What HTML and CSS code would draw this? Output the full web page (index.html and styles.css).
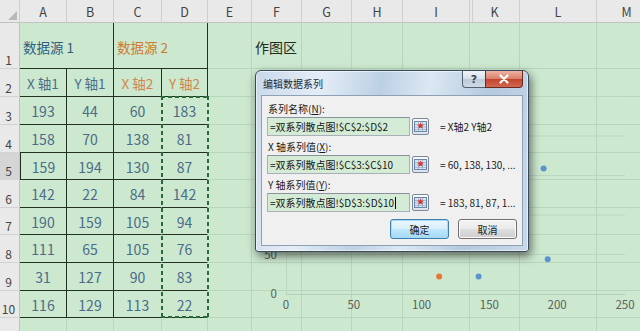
FILE: index.html
```html
<!DOCTYPE html>
<html lang="zh-CN">
<head>
<meta charset="utf-8">
<title>编辑数据系列</title>
<link rel="stylesheet" href="styles.css">
</head>
<body>
<div class="sheet">
  <div class="grid">
    <div class="hd corner"><span class="tri"></span></div>
    <div class="hd">A</div><div class="hd">B</div><div class="hd">C</div><div class="hd">D</div>
    <div class="hd">E</div><div class="hd">F</div><div class="hd">G</div><div class="hd">H</div>
    <div class="hd">I</div><div class="hd hidden-left">K</div><div class="hd">L</div><div class="hd">M</div>

    <div class="rh">1</div>
    <div class="d span2 src blue-dark">数据源 1</div>
    <div class="d span2 src orange-dark">数据源 2</div>
    <div class="c"></div>
    <div class="c plot-title">作图区</div>
    <div class="c"></div><div class="c"></div><div class="c"></div><div class="c"></div><div class="c"></div><div class="c"></div>

    <div class="rh">2</div>
    <div class="d lbl blue">X 轴1</div>
    <div class="d lbl blue">Y 轴1</div>
    <div class="d lbl orange">X 轴2</div>
    <div class="d lbl orange">Y 轴2</div>
    <div class="c"></div><div class="c"></div><div class="c"></div><div class="c"></div><div class="c"></div><div class="c"></div><div class="c"></div><div class="c"></div>

    <div class="rh">3</div>
    <div class="d num">193</div><div class="d num">44</div><div class="d num dc">60</div><div class="d num dd">183</div>
    <div class="c"></div><div class="c"></div><div class="c"></div><div class="c"></div><div class="c"></div><div class="c"></div><div class="c"></div><div class="c"></div>

    <div class="rh">4</div>
    <div class="d num">158</div><div class="d num">70</div><div class="d num dc">138</div><div class="d num dd">81</div>
    <div class="c"></div><div class="c"></div><div class="c"></div><div class="c"></div><div class="c"></div><div class="c"></div><div class="c"></div><div class="c"></div>

    <div class="rh sel">5</div>
    <div class="d num first">159</div><div class="d num">194</div><div class="d num dc">130</div><div class="d num dd">87</div>
    <div class="c"></div><div class="c"></div><div class="c"></div><div class="c"></div><div class="c"></div><div class="c"></div><div class="c"></div><div class="c"></div>

    <div class="rh">6</div>
    <div class="d num">142</div><div class="d num">22</div><div class="d num dc">84</div><div class="d num dd">142</div>
    <div class="c"></div><div class="c"></div><div class="c"></div><div class="c"></div><div class="c"></div><div class="c"></div><div class="c"></div><div class="c"></div>

    <div class="rh">7</div>
    <div class="d num">190</div><div class="d num">159</div><div class="d num dc">105</div><div class="d num dd">94</div>
    <div class="c"></div><div class="c"></div><div class="c"></div><div class="c"></div><div class="c"></div><div class="c"></div><div class="c"></div><div class="c"></div>

    <div class="rh">8</div>
    <div class="d num">111</div><div class="d num">65</div><div class="d num dc">105</div><div class="d num dd">76</div>
    <div class="c"></div><div class="c"></div><div class="c"></div><div class="c"></div><div class="c"></div><div class="c"></div><div class="c"></div><div class="c"></div>

    <div class="rh">9</div>
    <div class="d num">31</div><div class="d num">127</div><div class="d num dc">90</div><div class="d num dd">83</div>
    <div class="c"></div><div class="c"></div><div class="c"></div><div class="c"></div><div class="c"></div><div class="c"></div><div class="c"></div><div class="c"></div>

    <div class="rh">10</div>
    <div class="d num">116</div><div class="d num">129</div><div class="d num dc">113</div><div class="d num dd">22</div>
    <div class="c"></div><div class="c"></div><div class="c"></div><div class="c"></div><div class="c"></div><div class="c"></div><div class="c"></div><div class="c"></div>

    <div class="rh"></div>
    <div class="c"></div><div class="c"></div><div class="c"></div><div class="c"></div><div class="c"></div><div class="c"></div>
    <div class="c"></div><div class="c"></div><div class="c"></div><div class="c"></div><div class="c"></div><div class="c"></div>
  </div>

  <div class="overlay">
    <div class="ants"></div>
  </div>

  <div class="chart">
    <svg width="395" height="303" viewBox="0 0 395 303">
      <g class="gl">
        <line x1="41" y1="68.5" x2="380" y2="68.5"/>
        <line x1="41" y1="108" x2="380" y2="108"/>
        <line x1="41" y1="147.5" x2="380" y2="147.5"/>
        <line x1="41" y1="187" x2="380" y2="187"/>
        <line x1="41" y1="226.5" x2="380" y2="226.5"/>
        <line x1="41.5" y1="68.5" x2="41.5" y2="266"/>
      </g>
      <line class="axis" x1="41" y1="266.5" x2="380" y2="266.5"/>
      <g class="ylab">
        <text x="32" y="270">0</text>
        <text x="32" y="231">50</text>
      </g>
      <g class="xlab">
        <text x="41" y="281">0</text>
        <text x="108.8" y="281">50</text>
        <text x="176.6" y="281">100</text>
        <text x="244.4" y="281">150</text>
        <text x="312.2" y="281">200</text>
        <text x="380" y="281">250</text>
      </g>
      <g class="s1">
        <circle cx="302.7" cy="231.2" r="3"/>
        <circle cx="255.2" cy="210.7" r="3"/>
        <circle cx="256.6" cy="112.7" r="3"/>
        <circle cx="233.6" cy="248.6" r="3"/>
        <circle cx="298.6" cy="140.4" r="3"/>
        <circle cx="191.5" cy="214.7" r="3"/>
        <circle cx="83" cy="165.7" r="3"/>
        <circle cx="198.3" cy="164.1" r="3"/>
      </g>
      <g class="s2">
        <circle cx="122.4" cy="121.4" r="3"/>
        <circle cx="228.1" cy="202" r="3"/>
        <circle cx="217.3" cy="197.3" r="3"/>
        <circle cx="154.9" cy="153.8" r="3"/>
        <circle cx="183.4" cy="191.7" r="3"/>
        <circle cx="183.4" cy="206" r="3"/>
        <circle cx="163" cy="200.4" r="3"/>
        <circle cx="194.2" cy="248.6" r="3"/>
      </g>
    </svg>
  </div>

  <div class="dialog">
    <div class="titlebar">
      <span class="dtitle">编辑数据系列</span>
      <div class="tbtns">
        <span class="help">?</span>
        <span class="close">
          <svg width="12" height="10" viewBox="0 0 12 10"><path d="M2.5 1.5 L9.5 8.5 M9.5 1.5 L2.5 8.5" stroke="#fff" stroke-width="2.2" stroke-linecap="round"/></svg>
        </span>
      </div>
    </div>
    <div class="panel">
      <div class="field">
        <div class="flabel">系列名称(<u>N</u>):</div>
        <div class="frow">
          <div class="input">=双系列散点图!$C$2:$D$2</div>
          <span class="ref"><svg width="13" height="13" viewBox="0 0 13 13"><rect x="0.5" y="1.5" width="12" height="10" fill="#d9e4f1" stroke="#6a86ab"/><path d="M1 4.5h11M1 7h11M1 9.5h11M4.5 2v9M8.5 2v9" stroke="#98adc8" stroke-width="0.8"/><path d="M6.5 2.2 L7.4 4.6 L9.9 4.8 L8 6.3 L8.6 8.8 L6.5 7.4 L4.4 8.8 L5 6.3 L3.1 4.8 L5.6 4.6Z" fill="#e2332b"/></svg></span>
          <span class="val">= X轴2 Y轴2</span>
        </div>
      </div>
      <div class="field">
        <div class="flabel">X 轴系列值(<u>X</u>):</div>
        <div class="frow">
          <div class="input">=双系列散点图!$C$3:$C$10</div>
          <span class="ref"><svg width="13" height="13" viewBox="0 0 13 13"><rect x="0.5" y="1.5" width="12" height="10" fill="#d9e4f1" stroke="#6a86ab"/><path d="M1 4.5h11M1 7h11M1 9.5h11M4.5 2v9M8.5 2v9" stroke="#98adc8" stroke-width="0.8"/><path d="M6.5 2.2 L7.4 4.6 L9.9 4.8 L8 6.3 L8.6 8.8 L6.5 7.4 L4.4 8.8 L5 6.3 L3.1 4.8 L5.6 4.6Z" fill="#e2332b"/></svg></span>
          <span class="val">= 60, 138, 130, ...</span>
        </div>
      </div>
      <div class="field">
        <div class="flabel">Y 轴系列值(<u>Y</u>):</div>
        <div class="frow">
          <div class="input">=双系列散点图!$D$3:$D$10<span class="caret"></span></div>
          <span class="ref"><svg width="13" height="13" viewBox="0 0 13 13"><rect x="0.5" y="1.5" width="12" height="10" fill="#d9e4f1" stroke="#6a86ab"/><path d="M1 4.5h11M1 7h11M1 9.5h11M4.5 2v9M8.5 2v9" stroke="#98adc8" stroke-width="0.8"/><path d="M6.5 2.2 L7.4 4.6 L9.9 4.8 L8 6.3 L8.6 8.8 L6.5 7.4 L4.4 8.8 L5 6.3 L3.1 4.8 L5.6 4.6Z" fill="#e2332b"/></svg></span>
          <span class="val">= 183, 81, 87, 1...</span>
        </div>
      </div>
      <div class="btns">
        <span class="btn ok">确定</span>
        <span class="btn">取消</span>
      </div>
    </div>
  </div>
</div>
</body>
</html>
```

FILE: styles.css
```css
html, body {
  margin: 0;
  padding: 0;
  background: #cce8cf;
}

.sheet {
  position: relative;
  width: 640px;
  height: 331px;
  overflow: hidden;
  background: #cce8cf;
  font-family: "Noto Sans CJK SC", "Noto Sans", sans-serif;
}

.grid,
.overlay {
  display: grid;
  grid-template-columns: 20px 47px 47px 48px 46px 44px 50px 50px 51px 67px 50px 77px 60px;
  grid-template-rows: 23px 46px 28px 28px 28px 27px 28px 27px 28px 28px 27px 28px;
  width: 685px;
}

.grid > div {
  box-sizing: border-box;
  border-right: 1px solid #b8d6bb;
  border-bottom: 1px solid #b8d6bb;
  overflow: hidden;
  white-space: nowrap;
  min-width: 0;
}

/* headers */
.grid > .hd {
  background: #e9e9e9;
  border-right-color: #cfcfcf;
  border-bottom-color: #c2c2c2;
  color: #444;
  font-size: 12.5px;
  display: flex;
  align-items: center;
  justify-content: center;
  padding-top: 1px;
}

.grid > .hidden-left {
  box-shadow: inset 2px 0 0 #e9e9e9, inset 3px 0 0 #cfcfcf;
}

.corner {
  position: relative;
}

.tri {
  position: absolute;
  right: 2px;
  bottom: 2px;
  width: 0;
  height: 0;
  border-left: 9px solid transparent;
  border-bottom: 9px solid #b9b9b9;
}

.grid > .rh {
  background: #e9e9e9;
  border-right-color: #c2c2c2;
  border-bottom-color: #d2d2d2;
  color: #444;
  font-size: 12px;
  display: flex;
  align-items: flex-end;
  justify-content: center;
  padding-bottom: 1px;
  padding-right: 2px;
  line-height: 14px;
}

.grid > .rh.sel {
  background: #d5d5d5;
}

/* data table */
.grid > .d {
  border-right-color: #223022;
  border-bottom-color: #223022;
  display: flex;
  align-items: center;
  justify-content: center;
}

.grid > .d.first {
  border-left: 1px solid #223022;
}

.grid > .d.dc,
.grid > .d.dd {
  border-right-color: #cce8cf;
}

.span2 {
  grid-column: span 2;
}

.grid > .src {
  justify-content: flex-start;
  padding-left: 3px;
  padding-top: 2px;
  font-size: 13.5px;
}

.lbl {
  font-size: 13.5px;
  padding-top: 1px;
}

.num {
  font-size: 14px;
  color: #4a6c88;
  padding-top: 1px;
}

.blue-dark { color: #2f5e82; }
.orange-dark { color: #cf7a30; }
.blue { color: #4a6f8c; }
.orange { color: #d1874b; }

.grid > .plot-title {
  display: flex;
  align-items: center;
  padding-left: 3px;
  padding-top: 2px;
  font-size: 14px;
  color: #1f2a20;
  overflow: visible;
}

/* selection ants overlay */
.overlay {
  position: absolute;
  left: 0;
  top: 0;
  pointer-events: none;
}

.ants {
  grid-column: 5;
  grid-row: 4 / 12;
  margin: -1px -1px 0 -1px;
  background:
    repeating-linear-gradient(to bottom, #286b39 0 4px, transparent 4px 7px) left top / 2px 100% no-repeat,
    repeating-linear-gradient(to bottom, #286b39 0 4px, transparent 4px 7px) right top / 2px 100% no-repeat,
    repeating-linear-gradient(to right, #286b39 0 4px, transparent 4px 7px) left top / 100% 2px no-repeat,
    repeating-linear-gradient(to right, #286b39 0 4px, transparent 4px 7px) left bottom / 100% 2px no-repeat;
}

/* chart */
.chart {
  position: absolute;
  left: 245px;
  top: 28px;
  width: 395px;
  height: 303px;
}

.chart svg {
  display: block;
}

.gl line {
  stroke: #bcd6bf;
  stroke-width: 1;
}

.axis {
  stroke: #b3cdb6;
  stroke-width: 1;
}

.ylab text,
.xlab text {
  font-family: "Noto Sans CJK SC", "Noto Sans", sans-serif;
  font-size: 11.5px;
  fill: #5a5f5a;
}

.ylab text {
  text-anchor: end;
}

.xlab text {
  text-anchor: middle;
}

.s1 circle { fill: #5b93cf; }
.s2 circle { fill: #ec7434; }

/* dialog */
.dialog {
  position: absolute;
  left: 255px;
  top: 70px;
  width: 274px;
  height: 182px;
  box-sizing: border-box;
  border: 1px solid #3b4a5a;
  border-radius: 6px 6px 3px 3px;
  background: linear-gradient(100deg, #c9d9ea 0%, #e4edf6 22%, #bcd0e4 42%, #dce8f3 58%, #b4c9de 78%, #c8d9ea 100%);
  box-shadow: 2px 4px 10px rgba(0, 0, 0, 0.55), inset 0 0 0 1px rgba(255, 255, 255, 0.55);
  padding: 0 5px 5px 5px;
  display: flex;
  flex-direction: column;
  font-family: "Noto Sans CJK SC", "Noto Sans", sans-serif;
  font-size: 10px;
  color: #1b1b1b;
}

.titlebar {
  position: relative;
  height: 24px;
  display: flex;
  align-items: center;
  flex: none;
}

.dtitle {
  padding-left: 2px;
  font-size: 10px;
  color: #1e2733;
}

.tbtns {
  position: absolute;
  right: 0;
  top: 0;
  display: flex;
}

.help,
.close {
  display: flex;
  align-items: center;
  justify-content: center;
  height: 17px;
  box-sizing: border-box;
  border: 1px solid #55606e;
  border-top: none;
}

.help {
  width: 23px;
  border-radius: 0 0 0 4px;
  border-right: none;
  background: linear-gradient(to bottom, #eef3f8 0%, #d6e0ea 50%, #bccbda 52%, #cfdbe6 100%);
  color: #3b4652;
  font-family: "DejaVu Sans", sans-serif;
  font-size: 11px;
  font-weight: bold;
}

.close {
  width: 38px;
  border-radius: 0 0 4px 0;
  border-color: #6b2a22;
  background: linear-gradient(to bottom, #eeb3a4 0%, #d9806c 48%, #c4452f 52%, #d2674f 100%);
}

.panel {
  flex: 1;
  background: #f0f0f0;
  border: 1px solid #8ea0b3;
  padding: 4px 0 0 0;
  display: flex;
  flex-direction: column;
  gap: 2px;
}

.flabel {
  height: 17px;
  line-height: 17px;
  padding-left: 6px;
}

.frow {
  display: flex;
  align-items: center;
  height: 19px;
}

.input {
  position: relative;
  width: 143px;
  height: 19px;
  box-sizing: border-box;
  margin-left: 5px;
  border: 1px solid #a9b0b9;
  border-top-color: #8a929d;
  background: #d4ecd5;
  padding-left: 2px;
  line-height: 17px;
  display: flex;
  align-items: center;
  color: #151515;
  white-space: nowrap;
  overflow: hidden;
}

.caret {
  display: inline-block;
  width: 1px;
  height: 12px;
  background: #000;
  margin-left: 1px;
}

.ref {
  width: 17px;
  height: 17px;
  box-sizing: border-box;
  margin-left: 2px;
  border: 1px solid #7d8896;
  border-radius: 2px;
  background: linear-gradient(to bottom, #f7f9fb, #dde3ea);
  display: flex;
  align-items: center;
  justify-content: center;
}

.ref svg {
  display: block;
}

.val {
  margin-left: 11px;
  white-space: nowrap;
}

.btns {
  display: flex;
  justify-content: flex-end;
  gap: 9px;
  margin-top: 5px;
  padding-right: 5px;
}

.btn {
  width: 59px;
  height: 20px;
  box-sizing: border-box;
  border: 1px solid #707070;
  border-radius: 3px;
  background: linear-gradient(to bottom, #f3f3f3 0%, #ebebeb 48%, #dddddd 52%, #cfcfcf 100%);
  display: flex;
  align-items: center;
  justify-content: center;
  box-shadow: inset 0 0 0 1px #fbfbfb;
}

.btn.ok {
  border-color: #3c7fb1;
  box-shadow: inset 0 0 0 1px #a8daf5;
  background: linear-gradient(to bottom, #eaf6fd 0%, #d9f0fc 48%, #bee6fd 52%, #a7d9f5 100%);
}
```
